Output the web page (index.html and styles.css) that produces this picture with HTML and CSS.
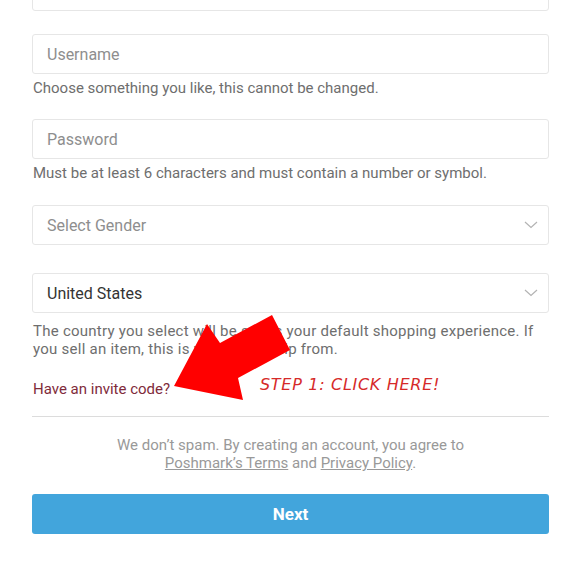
FILE: index.html
```html
<!DOCTYPE html>
<html>
<head>
<meta charset="utf-8">
<link rel="stylesheet" href="styles.css">
</head>
<body>
<div class="page">
  <form class="form">
    <div class="input top-input"></div>

    <div class="input field-username"><span class="placeholder">Username</span></div>
    <p class="helper">Choose something you like, this cannot be changed.</p>

    <div class="input field-password"><span class="placeholder">Password</span></div>
    <p class="helper">Must be at least 6 characters and must contain a number or symbol.</p>

    <div class="input select field-gender">
      <span class="placeholder">Select Gender</span>
      <svg class="chev" width="14" height="8" viewBox="0 0 14 8"><path d="M1 1 L7 6.5 L13 1" fill="none" stroke="#b3b3b3" stroke-width="1.2"/></svg>
    </div>

    <div class="input select field-country">
      <span class="value">United States</span>
      <svg class="chev" width="14" height="8" viewBox="0 0 14 8"><path d="M1 1 L7 6.5 L13 1" fill="none" stroke="#b3b3b3" stroke-width="1.2"/></svg>
    </div>
    <p class="helper helper-country">The country you select will be set as your default shopping experience. If<br>you sell an item, this is where you ship from.</p>

    <a class="invite" href="#">Have an invite code?</a>

    <hr class="divider">

    <p class="legal">We don’t spam. By creating an account, you agree to<br><a href="#">Poshmark’s Terms</a> and <a href="#">Privacy Policy</a>.</p>

    <button class="next" type="button">Next</button>
  </form>

  <svg class="arrow" width="580" height="580" viewBox="0 0 580 580">
    <polygon points="174,386 207,324 220,343 272,315 290,350 238,378 243,400" fill="#ff0000"/>
  </svg>
  <span class="annotation">STEP 1: CLICK HERE!</span>
</div>
</body>
</html>
```

FILE: styles.css
```css
html, body {
  margin: 0;
  padding: 0;
  background: #ffffff;
}

.page {
  position: relative;
  width: 580px;
  height: 580px;
  overflow: hidden;
  font-family: Roboto, "Liberation Sans", sans-serif;
}

.form {
  display: flex;
  flex-direction: column;
  padding: 0 31px 0 32px;
}

.input {
  box-sizing: border-box;
  height: 40px;
  border: 1px solid #e6e6e6;
  border-radius: 3px;
  display: flex;
  align-items: center;
  padding: 0 14px;
  font-size: 16px;
  background: #fff;
}

.top-input {
  margin-top: -29px;
}

.field-username {
  margin-top: 23px;
}

.field-password {
  margin-top: 22px;
}

.field-gender {
  margin-top: 23px;
}

.field-country {
  margin-top: 28px;
}

.placeholder {
  color: #8e8e8e;
}

.value {
  color: #333333;
}

.select {
  justify-content: space-between;
}

.chev {
  margin-right: -4px;
}

.helper {
  margin: 5px 0 0 1px;
  font-size: 15px;
  line-height: 18px;
  color: #6e6e6e;
}

.helper-country {
  margin-top: 9px;
  letter-spacing: 0.25px;
}

.invite {
  margin: 22px 0 0 1px;
  font-size: 15px;
  line-height: 18px;
  color: #7f2b3b;
  text-decoration: none;
  align-self: flex-start;
}

.divider {
  margin: 18px 0 0 0;
  border: 0;
  border-top: 1px solid #dcdcdc;
  height: 0;
}

.legal {
  margin: 19px 0 0 0;
  text-align: center;
  font-size: 15px;
  line-height: 18px;
  color: #999999;
}

.legal a {
  color: #999999;
  text-decoration: underline;
}

.next {
  margin-top: 22px;
  height: 40px;
  border: 0;
  border-radius: 3px;
  background: #42a5dc;
  color: #ffffff;
  font-family: Roboto, "Liberation Sans", sans-serif;
  font-weight: bold;
  font-size: 17px;
}

.arrow {
  position: absolute;
  left: 0;
  top: 0;
  pointer-events: none;
}

.annotation {
  position: absolute;
  left: 260px;
  top: 375px;
  font-family: "DejaVu Sans", sans-serif;
  font-style: oblique;
  font-size: 16px;
  color: #d62a2a;
  letter-spacing: 0.7px;
}
```
